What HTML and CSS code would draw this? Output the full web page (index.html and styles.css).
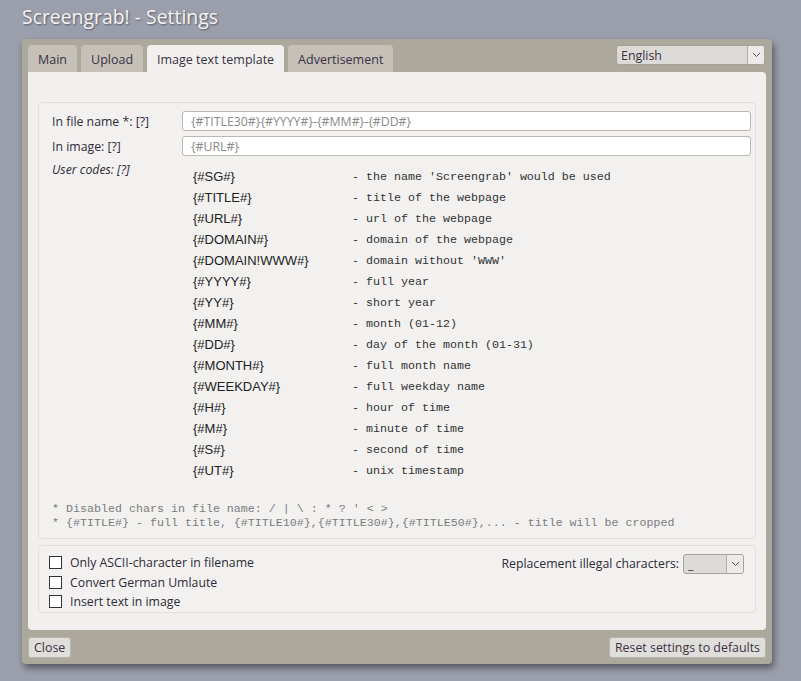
FILE: index.html
```html
<!DOCTYPE html>
<html>
<head>
<meta charset="utf-8">
<title>Screengrab! - Settings</title>
<link rel="stylesheet" href="styles.css">
</head>
<body>
<h1 class="title">Screengrab! - Settings</h1>
<div class="dialog">
  <div class="tabbar">
    <div class="tab">Main</div>
    <div class="tab">Upload</div>
    <div class="tab active">Image text template</div>
    <div class="tab">Advertisement</div>
    <div class="select lang"><span class="select-val">English</span><span class="select-btn"><svg width="9" height="6" viewBox="0 0 9 6"><path d="M1 1 L4.5 4.5 L8 1" fill="none" stroke="#555" stroke-width="1"/></svg></span></div>
  </div>
  <div class="panel">
    <div class="group main-group">
      <div class="row">
        <div class="label">In file name *: [?]</div>
        <div class="input">{#TITLE30#}{#YYYY#}-{#MM#}-{#DD#}</div>
      </div>
      <div class="row">
        <div class="label">In image: [?]</div>
        <div class="input">{#URL#}</div>
      </div>
      <div class="row codes-row">
        <div class="label italic">User codes: [?]</div>
        <div class="codes">
          <span class="code">{#SG#}</span><span class="desc">- the name 'Screengrab' would be used</span>
          <span class="code">{#TITLE#}</span><span class="desc">- title of the webpage</span>
          <span class="code">{#URL#}</span><span class="desc">- url of the webpage</span>
          <span class="code">{#DOMAIN#}</span><span class="desc">- domain of the webpage</span>
          <span class="code">{#DOMAIN!WWW#}</span><span class="desc">- domain without 'WWW'</span>
          <span class="code">{#YYYY#}</span><span class="desc">- full year</span>
          <span class="code">{#YY#}</span><span class="desc">- short year</span>
          <span class="code">{#MM#}</span><span class="desc">- month (01-12)</span>
          <span class="code">{#DD#}</span><span class="desc">- day of the month (01-31)</span>
          <span class="code">{#MONTH#}</span><span class="desc">- full month name</span>
          <span class="code">{#WEEKDAY#}</span><span class="desc">- full weekday name</span>
          <span class="code">{#H#}</span><span class="desc">- hour of time</span>
          <span class="code">{#M#}</span><span class="desc">- minute of time</span>
          <span class="code">{#S#}</span><span class="desc">- second of time</span>
          <span class="code">{#UT#}</span><span class="desc">- unix timestamp</span>
        </div>
      </div>
      <div class="notes">
        <div>* Disabled chars in file name: / | \ : * ? ' &lt; &gt;</div>
        <div>* {#TITLE#} - full title, {#TITLE10#},{#TITLE30#},{#TITLE50#},... - title will be cropped</div>
      </div>
    </div>
    <div class="group opts-group">
      <div class="checks">
        <label class="check"><span class="box"></span>Only ASCII-character in filename</label>
        <label class="check"><span class="box"></span>Convert German Umlaute</label>
        <label class="check"><span class="box"></span>Insert text in image</label>
      </div>
      <div class="replace">
        <span>Replacement illegal characters:</span>
        <div class="select small"><span class="select-val">_</span><span class="select-btn"><svg width="9" height="6" viewBox="0 0 9 6"><path d="M1 1 L4.5 4.5 L8 1" fill="none" stroke="#555" stroke-width="1"/></svg></span></div>
      </div>
    </div>
  </div>
  <div class="footer">
    <div class="btn">Close</div>
    <div class="btn">Reset settings to defaults</div>
  </div>
</div>
</body>
</html>
```
FILE: styles.css
```css
* { box-sizing: border-box; }
body {
  margin: 0;
  background: #9b9fab;
  font-family: "Open Sans", "Noto Sans", sans-serif;
  font-size: 12.3px;
  color: #2f2b38;
  width: 801px;
  height: 681px;
  overflow: hidden;
}
.title {
  margin: 0;
  padding: 4px 0 0 22px;
  height: 39px;
  font-size: 19.4px;
  font-weight: normal;
  color: #f4f4f4;
  text-shadow: 1px 1px 2px rgba(0,0,0,0.45);
  line-height: 26px;
}
.dialog {
  margin-left: 22px;
  width: 750px;
  height: 625px;
  background: #aca89c;
  border-radius: 4px;
  box-shadow: 2px 4px 7px rgba(0,0,0,0.45);
  padding: 6px 6px 0 6px;
}
.tabbar {
  display: flex;
  gap: 4px;
  height: 27px;
  align-items: flex-end;
}
.tab {
  height: 27px;
  padding: 0 10px;
  background: #c5c1b9;
  border-radius: 4px 4px 0 0;
  line-height: 29px;
  font-size: 12.5px;
  color: #3a3144;
}
.tab.active { background: #f1f0ee; }
.select {
  display: flex;
  height: 20px;
  border: 1px solid #a6a29a;
  border-radius: 3px;
  background: #dddbd7;
  align-self: flex-start;
}
.lang { margin-left: auto; width: 149px; margin-right: 1px; }
.select-val {
  flex: 1;
  padding-left: 4px;
  line-height: 20px;
  font-size: 12.4px;
  color: #3a3144;
}
.select-btn {
  width: 17px;
  border-left: 1px solid #b3afa7;
  background: #ebeae8;
  display: flex;
  align-items: center;
  justify-content: center;
  border-radius: 0 2px 2px 0;
}
.panel {
  background: #f1f0ee;
  height: 558px;
  border-radius: 0 4px 4px 4px;
  padding: 30px 10px 0 10px;
  display: flex;
  flex-direction: column;
  gap: 6px;
}
.group {
  border: 1px solid #e2e0dc;
  border-radius: 4px;
  background: #f2f1ef;
}
.main-group {
  height: 437px;
  padding: 8px 4px 8px 13px;
  display: flex;
  flex-direction: column;
}
.row { display: flex; margin-bottom: 5px; }
.label {
  width: 130px;
  height: 20px;
  line-height: 22px;
}
.italic { font-style: italic; line-height: 18px; height: auto; }
.input {
  flex: 1;
  height: 20px;
  background: #fff;
  border: 1px solid #bcb8b0;
  border-radius: 3px;
  padding-left: 8px;
  line-height: 19px;
  color: #8a8a8a;
}
.codes {
  display: grid;
  grid-template-columns: 159px auto;
  grid-auto-rows: 21px;
  padding: 5px 0 0 11px;
  align-items: center;
}
.code {
  font-family: "Liberation Sans", Arial, sans-serif;
  font-size: 13px;
  color: #222;
}
.desc {
  font-family: "Liberation Mono", monospace;
  font-size: 11.67px;
  color: #333;
}
.notes {
  margin-top: auto;
  font-family: "Liberation Mono", monospace;
  font-size: 11.67px;
  line-height: 14px;
  color: #7c7c7c;
}
.opts-group {
  height: 68px;
  padding: 7px 11px 0 10px;
  display: flex;
  justify-content: space-between;
}
.checks { display: flex; flex-direction: column; }
.check {
  display: flex;
  align-items: center;
  height: 19.5px;
}
.box {
  width: 13px;
  height: 13px;
  border: 1px solid #333;
  background: #fff;
  margin-right: 8px;
}
.replace {
  display: flex;
  align-items: flex-start;
  gap: 4px;
  padding-top: 1px;
}
.replace span:first-child { line-height: 20px; }
.small { width: 61px; }
.small .select-val { line-height: 20px; }
.footer {
  display: flex;
  justify-content: space-between;
  padding-top: 7px;
}
.btn {
  height: 21px;
  padding: 0 5px;
  border: 1px solid #b9b5ad;
  border-radius: 3px;
  background: #e0deda;
  font-size: 12.4px;
  line-height: 20px;
  color: #3a3144;
}
```
